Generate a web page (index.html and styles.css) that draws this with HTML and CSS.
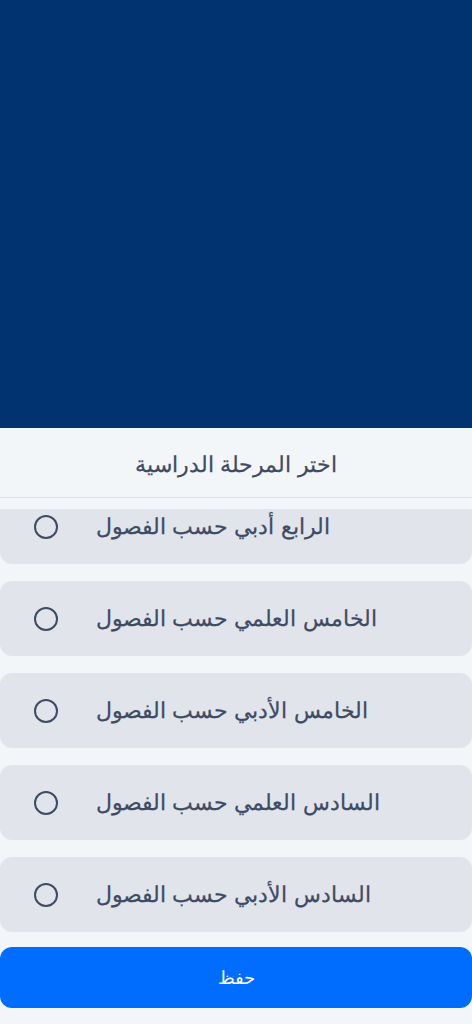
FILE: index.html
```html
<!DOCTYPE html>
<html lang="ar">
<head>
<meta charset="utf-8">
<link rel="stylesheet" href="styles.css">
</head>
<body>
<div class="backdrop"></div>
<div class="sheet">
  <div class="sheet-header"><span dir="rtl">اختر المرحلة الدراسية</span></div>
  <div class="list">
    <div class="list-inner">
      <div class="option"><span class="radio"></span><span class="label" dir="rtl">الرابع أدبي حسب الفصول</span></div>
      <div class="option"><span class="radio"></span><span class="label" dir="rtl">الخامس العلمي حسب الفصول</span></div>
      <div class="option"><span class="radio"></span><span class="label" dir="rtl">الخامس الأدبي حسب الفصول</span></div>
      <div class="option"><span class="radio"></span><span class="label" dir="rtl">السادس العلمي حسب الفصول</span></div>
      <div class="option"><span class="radio"></span><span class="label" dir="rtl">السادس الأدبي حسب الفصول</span></div>
    </div>
  </div>
  <button class="save" type="button"><span dir="rtl">حفظ</span></button>
</div>
</body>
</html>
```
FILE: styles.css
```css
* { box-sizing: border-box; }
html, body { margin: 0; padding: 0; }
body {
  width: 472px;
  height: 1024px;
  overflow: hidden;
  display: flex;
  flex-direction: column;
  font-family: "Liberation Sans", sans-serif;
  background: #f3f6f9;
}
.backdrop {
  height: 428px;
  flex: none;
  background: #00336f;
}
.sheet {
  flex: 1;
  display: flex;
  flex-direction: column;
  background: #f3f6f9;
}
.sheet-header {
  height: 70px;
  flex: none;
  display: flex;
  align-items: center;
  justify-content: center;
  padding-top: 5px;
  border-bottom: 1px solid #dde1e6;
  color: #3e4b63;
  font-size: 22.4px;
  line-height: 30px;
  -webkit-text-stroke: 0.25px #3e4b63;
}
.list {
  margin-top: 11px;
  height: 423px;
  flex: none;
  overflow: hidden;
}
.list-inner {
  margin-top: -20px;
  display: flex;
  flex-direction: column;
  gap: 17px;
}
.option {
  height: 75px;
  border-radius: 12px;
  background: #e1e5eb;
  display: flex;
  align-items: center;
  padding-left: 34px;
  gap: 38px;
}
.radio {
  width: 24px;
  height: 24px;
  flex: none;
  border-radius: 50%;
  border: 2.4px solid #3e4b63;
}
.label {
  color: #3e4b63;
  font-size: 22.4px;
  line-height: 30px;
  -webkit-text-stroke: 0.25px #3e4b63;
}
.save {
  margin: 15px 0 0;
  height: 61px;
  flex: none;
  width: 100%;
  border: none;
  border-radius: 12px;
  background: #006dff;
  color: #ffffff;
  font-family: inherit;
  font-size: 18px;
  line-height: 24px;
}
```
